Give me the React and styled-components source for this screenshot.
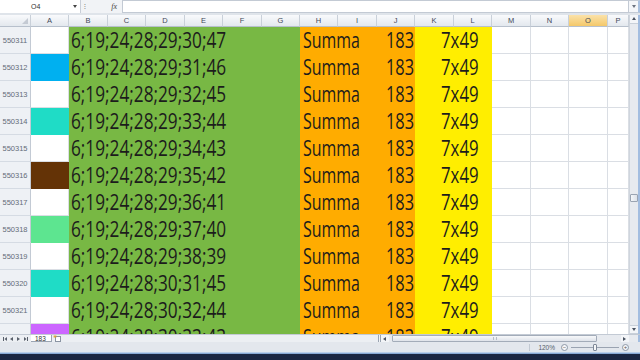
import React from 'react';
import styled, { createGlobalStyle } from 'styled-components';

// --- Global ---

const GlobalStyle = createGlobalStyle`
  html, body {
    margin: 0;
    padding: 0;
    background: #ffffff;
  }
  body {
    font-family: 'Liberation Sans', Arial, sans-serif;
  }
  * {
    box-sizing: border-box;
  }
`;

// column widths: row header, A..O, part of P
const COLS = '31px 38px 39px 38px 39px 38px 39px 38px 38px 39px 38px 39px 38px 39px 38px 39px 21px';

const colors = {
  green: '#78b844',
  orange: '#ffac00',
  yellow: '#ffee00',
  grid: '#dadee4',
  headLine: '#c3cad4',
  chrome: '#e4e8ee',
};

const letters = ['A', 'B', 'C', 'D', 'E', 'F', 'G', 'H', 'I', 'J', 'K', 'L', 'M', 'N', 'O', 'P'];

const rows = [
  { n: 550311, a: '#ffffff', nums: '6;19;24;28;29;30;47' },
  { n: 550312, a: '#00b0f0', nums: '6;19;24;28;29;31;46' },
  { n: 550313, a: '#ffffff', nums: '6;19;24;28;29;32;45' },
  { n: 550314, a: '#1fdcc6', nums: '6;19;24;28;29;33;44' },
  { n: 550315, a: '#ffffff', nums: '6;19;24;28;29;34;43' },
  { n: 550316, a: '#643306', nums: '6;19;24;28;29;35;42' },
  { n: 550317, a: '#ffffff', nums: '6;19;24;28;29;36;41' },
  { n: 550318, a: '#5de590', nums: '6;19;24;28;29;37;40' },
  { n: 550319, a: '#ffffff', nums: '6;19;24;28;29;38;39' },
  { n: 550320, a: '#1fdcc6', nums: '6;19;24;28;30;31;45' },
  { n: 550321, a: '#ffffff', nums: '6;19;24;28;30;32;44' },
  { n: 550322, a: '#cc66ff', nums: '6;19;24;28;30;33;43' },
];

// --- Window ---

const Window = styled.div`
  width: 640px;
  height: 360px;
  display: flex;
  flex-direction: column;
  overflow: hidden;
  background: ${colors.chrome};
`;

// --- Formula bar ---

const FormulaBar = styled.div`
  height: 13px;
  display: flex;
  align-items: stretch;
  background: #f1f3f6;
  flex-shrink: 0;
`;

const NameBox = styled.div`
  width: 81px;
  display: flex;
  align-items: center;
  justify-content: space-between;
  padding: 0 3px 0 31px;
  background: #ffffff;
  border-right: 1px solid #c8ced8;
  font-size: 7px;
  color: #333;
`;

const FxBox = styled.div`
  width: 41px;
  display: flex;
  align-items: center;
  justify-content: space-between;
  padding: 0 5px 0 3px;
  color: #666;
  font-size: 7px;
`;

const Fx = styled.span`
  font-family: 'Liberation Serif', serif;
  font-style: italic;
  font-size: 8px;
  color: #444;
`;

const FormulaInput = styled.div`
  flex: 1;
  background: #ffffff;
  border: 1px solid #c3cad4;
  border-right: none;
`;

const ExpandBtn = styled.div`
  width: 12px;
  display: flex;
  align-items: center;
  justify-content: center;
  background: #f4f6f9;
  border: 1px solid #c3cad4;
  border-right: 2px solid #a9c1e0;
`;

const BarGap = styled.div`
  height: 2px;
  flex-shrink: 0;
  background: #dfe4ea;
`;

// --- Sheet ---

const SheetArea = styled.div`
  height: 319px;
  display: flex;
  flex-shrink: 0;
`;

const Grid = styled.div`
  width: 629px;
  overflow: hidden;
  background: #ffffff;
  display: flex;
  flex-direction: column;
`;

const HeaderRow = styled.div`
  display: grid;
  grid-template-columns: ${COLS};
  height: 12px;
  flex-shrink: 0;
`;

const ColHead = styled.div`
  display: flex;
  align-items: center;
  justify-content: center;
  font-size: 7.5px;
  color: #3f4858;
  background: ${p => (p.$active
    ? 'linear-gradient(#fbe2a9, #f4c86a)'
    : 'linear-gradient(#f9fafc, #e3e8ee)')};
  border-right: 1px solid #c9d0d9;
  border-bottom: 1px solid #b7c0cc;
`;

const Corner = styled(ColHead)`
  justify-content: flex-end;
  align-items: flex-end;
  padding: 0 2px 2px 0;
`;

const DataRow = styled.div`
  display: grid;
  grid-template-columns: ${COLS};
  height: 27px;
  flex-shrink: 0;
`;

const RowHead = styled.div`
  display: flex;
  align-items: center;
  justify-content: center;
  font-size: 7.5px;
  color: #646c78;
  background: #eef1f5;
  border-right: 1px solid ${colors.headLine};
  border-bottom: 1px solid #d5dbe3;
`;

const Cell = styled.div`
  background: ${p => p.$bg || '#ffffff'};
  border-right: 1px solid ${p => (p.$bg && p.$bg !== '#ffffff' ? p.$bg : colors.grid)};
  border-bottom: 1px solid ${p => (p.$bg && p.$bg !== '#ffffff' ? p.$bg : colors.grid)};
`;

const Band = styled.div`
  grid-column: span ${p => p.$span};
  background: ${p => p.$bg};
  display: flex;
  align-items: center;
  justify-content: ${p => p.$justify || 'flex-start'};
  padding: ${p => p.$pad || '0 0 0 2px'};
  overflow: hidden;
`;

const Val = styled.span`
  display: inline-block;
  font-family: 'Open Sans', 'Liberation Sans', sans-serif;
  font-size: 21px;
  line-height: 1;
  color: #1c1c1c;
  white-space: nowrap;
  transform: scaleX(${p => p.$squeeze || 0.82});
  transform-origin: ${p => (p.$right ? 'right' : 'left')} center;
`;

// --- Vertical scrollbar ---

const VScroll = styled.div`
  width: 11px;
  display: flex;
  flex-direction: column;
  background: #e7eaef;
  border-left: 1px solid #cfd5dd;
  border-right: 2px solid #a3bde0;
`;

const VBtn = styled.div`
  height: 9px;
  flex-shrink: 0;
  display: flex;
  align-items: center;
  justify-content: center;
  background: #f3f5f8;
  border-bottom: 1px solid #c9d0d9;
  border-top: ${p => (p.$bottom ? '1px solid #c9d0d9' : 'none')};
`;

const VTrack = styled.div`
  flex: 1;
  display: flex;
  flex-direction: column;
  align-items: center;
`;

const VThumb = styled.div`
  margin-top: 170px;
  width: 8px;
  height: 8px;
  background: linear-gradient(90deg, #f4f6f9, #dde2e9);
  border: 1px solid #9aa4b2;
  border-radius: 1px;
`;

// --- Tab bar ---

const TabBar = styled.div`
  height: 8px;
  flex-shrink: 0;
  display: flex;
  align-items: stretch;
  background: #eceff3;
  border-top: 1px solid ${colors.headLine};
`;

const TabNav = styled.div`
  width: 31px;
  display: flex;
  align-items: center;
  justify-content: space-around;
  padding: 0 2px;
`;

const SheetTab = styled.div`
  display: flex;
  align-items: center;
  padding: 0 5px 0 4px;
  background: #ffffff;
  font-size: 6.5px;
  color: #333;
  border-right: 1px solid #9aa4b2;
  border-bottom: 1px solid #9aa4b2;
`;

const NewTab = styled.div`
  width: 12px;
  display: flex;
  align-items: center;
  justify-content: center;
`;

const Filler = styled.div`
  flex: 1;
`;

const HScroll = styled.div`
  width: 251px;
  display: flex;
  align-items: stretch;
  background: #e7eaef;
`;

const Split = styled.div`
  width: 3px;
  border-left: 1px solid #9aa4b2;
  border-right: 1px solid #9aa4b2;
  background: #f1f3f6;
`;

const HBtn = styled.div`
  width: 8px;
  display: flex;
  align-items: center;
  justify-content: center;
  background: #f3f5f8;
`;

const HTrack = styled.div`
  flex: 1;
  display: flex;
  align-items: center;
  padding: 0 24px 0 3px;
`;

const HThumb = styled.div`
  flex: 1;
  height: 7px;
  display: flex;
  align-items: center;
  justify-content: center;
  background: linear-gradient(#f7f8fa, #dfe3ea);
  border: 1px solid #a3acb9;
  border-radius: 1px;
`;

const Grip = styled.div`
  width: 4px;
  height: 3px;
  border-left: 1px solid #b6bdc8;
  border-right: 1px solid #b6bdc8;
`;

const CornerBox = styled.div`
  width: 11px;
  border-right: 2px solid #a3bde0;
  background: #e7eaef;
`;

// --- Status bar ---

const StatusBar = styled.div`
  height: 10px;
  flex-shrink: 0;
  display: flex;
  align-items: center;
  justify-content: flex-end;
  gap: 3px;
  padding-right: 11px;
  background: #e3e7ed;
`;

const Divider = styled.div`
  width: 1px;
  height: 7px;
  background: #c2c9d3;
  margin-right: 5px;
`;

const ZoomText = styled.span`
  font-size: 6.5px;
  color: #555e6c;
  margin-right: 3px;
`;

const ZoomBtn = styled.div`
  width: 7px;
  height: 7px;
  border-radius: 50%;
  border: 1px solid #8d97a6;
  background: #f6f7f9;
  display: flex;
  align-items: center;
  justify-content: center;
  font-size: 6px;
  line-height: 1;
  color: #555;
`;

const Slider = styled.div`
  width: 48px;
  height: 7px;
  display: flex;
  align-items: center;
  justify-content: center;
  background: linear-gradient(transparent 3px, #9aa3b1 3px, #9aa3b1 4px, transparent 4px);
`;

const SliderThumb = styled.div`
  width: 4px;
  height: 7px;
  background: #f5f6f8;
  border: 1px solid #7f8998;
  border-radius: 1px;
`;

const FrameLine = styled.div`
  height: 2px;
  flex-shrink: 0;
  background: linear-gradient(#d3e1f2, #6e95c9);
`;

const Taskbar = styled.div`
  height: 6px;
  flex-shrink: 0;
  background: #1b2641;
`;

// --- Small drawings ---

const Tri = ({ dir = 'down', size = 4, color = '#4b5361' }) => {
  const pts = {
    down: '0,0 4,0 2,3',
    up: '0,3 4,3 2,0',
    left: '3,0 3,4 0,2',
    right: '0,0 0,4 3,2',
  }[dir];
  return (
    <svg width={size} height={size} viewBox="0 0 4 4">
      <polygon points={pts} fill={color} />
    </svg>
  );
};

const NavArrows = () => (
  <TabNav>
    <svg width="5" height="4" viewBox="0 0 5 4">
      <rect x="0" y="0" width="1" height="4" fill="#59606b" />
      <polygon points="4,0 4,4 1.5,2" fill="#59606b" />
    </svg>
    <Tri dir="left" color="#59606b" />
    <Tri dir="right" color="#59606b" />
    <svg width="5" height="4" viewBox="0 0 5 4">
      <polygon points="1,0 1,4 3.5,2" fill="#59606b" />
      <rect x="4" y="0" width="1" height="4" fill="#59606b" />
    </svg>
  </TabNav>
);

const InsertSheetIcon = () => (
  <svg width="9" height="7" viewBox="0 0 9 7">
    <rect x="2.5" y="1.5" width="5" height="5" fill="#ffffff" stroke="#8a94a3" />
    <path d="M1 0.5 L3 2.5 M3 0.5 L1 2.5 M2 0 L2 3 M0.5 1.5 L3.5 1.5" stroke="#e0a030" strokeWidth="0.7" />
  </svg>
);

// --- App ---

export default function App() {
  return (
    <>
      <GlobalStyle />
      <Window>
        <FormulaBar>
          <NameBox>
            <span>O4</span>
            <Tri dir="down" size={4} color="#444" />
          </NameBox>
          <FxBox>
            <span>⁝</span>
            <Fx>fx</Fx>
          </FxBox>
          <FormulaInput />
          <ExpandBtn>
            <Tri dir="down" size={4} color="#6b7380" />
          </ExpandBtn>
        </FormulaBar>
        <BarGap />

        <SheetArea>
          <Grid>
            <HeaderRow>
              <Corner>
                <svg width="6" height="6" viewBox="0 0 6 6">
                  <polygon points="6,0 6,6 0,6" fill="#c4cad3" />
                </svg>
              </Corner>
              {letters.map(l => (
                <ColHead key={l} $active={l === 'O'}>{l}</ColHead>
              ))}
            </HeaderRow>

            {rows.map(r => (
              <DataRow key={r.n}>
                <RowHead>{r.n}</RowHead>
                <Cell $bg={r.a} />
                <Band $span={6} $bg={colors.green}>
                  <Val>{r.nums}</Val>
                </Band>
                <Band $span={3} $bg={colors.orange} $justify="space-between" $pad="0 7px 0 3px">
                  <Val $squeeze={0.76}>Summa</Val>
                  <Val $right $squeeze={0.78}>183</Val>
                </Band>
                <Band $span={2} $bg={colors.yellow} $pad="0 0 0 26px">
                  <Val $squeeze={0.8}>7x49</Val>
                </Band>
                <Cell />
                <Cell />
                <Cell />
                <Cell />
              </DataRow>
            ))}
          </Grid>

          <VScroll>
            <VBtn>
              <Tri dir="up" size={4} />
            </VBtn>
            <VTrack>
              <VThumb />
            </VTrack>
            <VBtn $bottom>
              <Tri dir="down" size={4} />
            </VBtn>
          </VScroll>
        </SheetArea>

        <TabBar>
          <NavArrows />
          <SheetTab>183</SheetTab>
          <NewTab>
            <InsertSheetIcon />
          </NewTab>
          <Filler />
          <HScroll>
            <Split />
            <HBtn>
              <Tri dir="left" size={4} />
            </HBtn>
            <HTrack>
              <HThumb>
                <Grip />
              </HThumb>
            </HTrack>
            <HBtn>
              <Tri dir="right" size={4} />
            </HBtn>
          </HScroll>
          <CornerBox />
        </TabBar>

        <StatusBar>
          <Divider />
          <ZoomText>120%</ZoomText>
          <ZoomBtn>−</ZoomBtn>
          <Slider>
            <SliderThumb />
          </Slider>
          <ZoomBtn>+</ZoomBtn>
        </StatusBar>
        <FrameLine />
        <Taskbar />
      </Window>
    </>
  );
}
